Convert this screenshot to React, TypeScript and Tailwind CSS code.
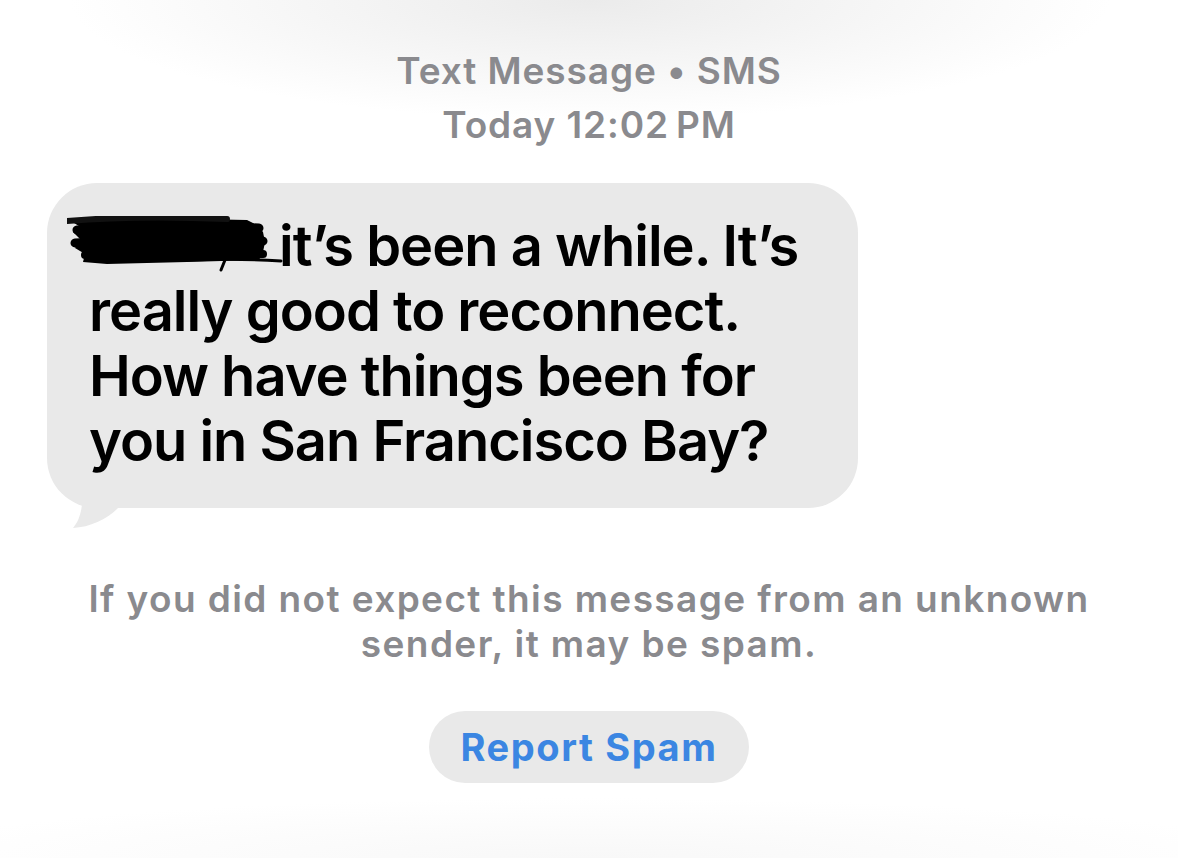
export default function App() {
  return (
    <div
      className="relative w-[1178px] h-[858px] overflow-hidden bg-white bg-[radial-gradient(ellipse_520px_120px_at_590px_0px,#ebebeb,#ffffff00),radial-gradient(ellipse_700px_60px_at_590px_858px,#f8f8f8,#ffffff00)] flex flex-col items-center"
      style={{ fontFamily: "Inter, 'Noto Sans', sans-serif" }}
    >
      <div className="pt-[44px] text-center text-[37px] leading-[54px] font-semibold text-[#8a8a8e] tracking-[0.9px]">
        <div>Text Message • SMS</div>
        <div>Today 12:02&#8239;PM</div>
      </div>

      <div className="self-start ml-[47px] mt-[31px] relative w-[811px] rounded-[50px] bg-[#e9e9e9] pl-[42px] pr-6 pt-[31px] pb-[34px] text-[56px] leading-[65px] font-semibold text-black tracking-[-1px] whitespace-nowrap">
        <div>
          <span className="relative inline-block w-[190px] h-[10px]">
            <svg
              className="absolute -left-[22px] -top-[40px]"
              width="220"
              height="58"
              viewBox="0 0 220 58"
            >
              <path
                d="M2 4 L60 1 L130 3 L180 4 L190 9 L196 16 L198 26 L196 36 L192 44 L120 46 L40 48 L16 46 L18 38 L8 32 L14 24 L6 16 L12 10 Z"
                fill="#000"
              />
              <path d="M0 5 Q70 -1 160 3" stroke="#111" strokeWidth="6" fill="none" strokeLinecap="round" />
              <path d="M10 14 Q90 9 192 12" stroke="#000" strokeWidth="9" fill="none" strokeLinecap="round" />
              <path d="M8 27 Q100 22 196 25" stroke="#000" strokeWidth="9" fill="none" strokeLinecap="round" />
              <path d="M18 39 Q110 35 196 38" stroke="#000" strokeWidth="8" fill="none" strokeLinecap="round" />
              <path d="M120 44 Q170 42 214 45" stroke="#000" strokeWidth="3" fill="none" strokeLinecap="round" />
              <path d="M158 44 L154 54" stroke="#000" strokeWidth="3" fill="none" strokeLinecap="round" />
            </svg>
          </span>
          it’s been a while. It’s
        </div>
        <div>really good to reconnect.</div>
        <div>How have things been for</div>
        <div>you in San Francisco Bay?</div>

        <svg
          className="absolute left-0 top-full -mt-[20px]"
          width="100"
          height="45"
          viewBox="0 -20 100 45"
        >
          <path d="M36 -14 C35 4 32 13 26 20 C44 19 61 11 73 -2 L73 -14 Z" fill="#e9e9e9" />
        </svg>
      </div>

      <div className="mt-[68px] text-center text-[37px] leading-[45px] font-semibold text-[#8a8a8e] tracking-[1.4px]">
        <div>If you did not expect this message from an unknown</div>
        <div>sender, it may be spam.</div>
      </div>

      <button className="mt-[45px] w-[320px] h-[72px] rounded-full bg-[#e9e9e9] text-[38px] font-bold text-[#3b86e2] tracking-[1.6px]">
        Report Spam
      </button>
    </div>
  );
}
